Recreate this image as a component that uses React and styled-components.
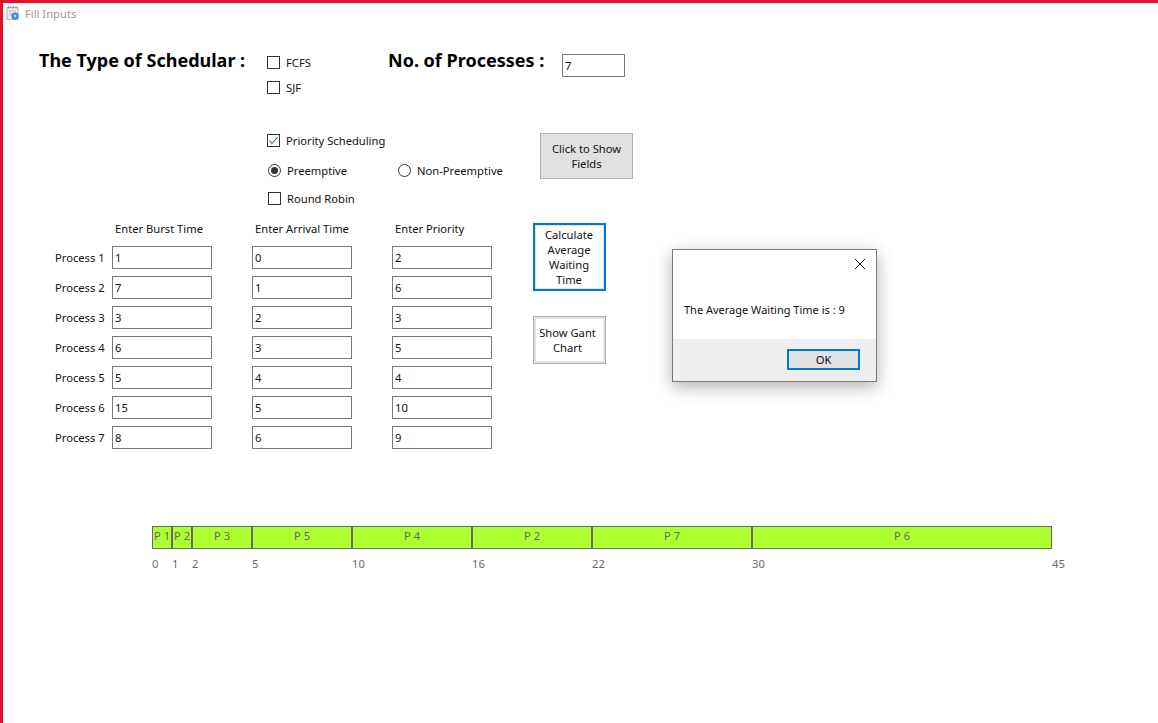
import styled, { createGlobalStyle } from 'styled-components';

const GlobalStyle = createGlobalStyle`
    html, body {
        margin: 0;
        padding: 0;
        background: #fff;
    }
    * {
        box-sizing: border-box;
    }
`;

const Frame = styled.div`
    position: relative;
    width: 1158px;
    height: 723px;
    overflow: hidden;
    background: #fff;
    border-top: 3px solid #e11127;
    border-left: 3px solid #e11127;
    font-family: "Noto Sans", "Open Sans", sans-serif;
    font-size: 11.2px;
    color: #111;
`;

const TitleBar = styled.div`
    display: flex;
    align-items: center;
    gap: 4px;
    height: 20px;
    padding-left: 2px;
    color: #9a9a9a;
`;

const Body = styled.div`
    display: flex;
    flex-direction: column;
    padding: 25px 0 0 36px;
`;

const TopArea = styled.div`
    display: flex;
`;

const Heading = styled.h1`
    margin: 0;
    font-size: 18px;
    font-weight: 700;
    line-height: 24px;
    color: #000;
    width: ${({$width}) => $width}px;
`;

const ChoiceColumn = styled.div`
    display: flex;
    flex-direction: column;
    width: 121px;
    margin-top: 2px;
`;

const Choice = styled.label`
    display: flex;
    align-items: center;
    gap: 6px;
    height: ${({$height}) => $height ?? 25}px;
    margin-left: ${({$indent}) => $indent ?? 0}px;
`;

const Check = styled.span`
    display: flex;
    align-items: center;
    justify-content: center;
    width: 13px;
    height: 13px;
    border: 1px solid #333;
    background: #fff;
`;

const Radio = styled.span`
    display: flex;
    align-items: center;
    justify-content: center;
    width: 13px;
    height: 13px;
    border: 1px solid #333;
    border-radius: 50%;
    &::after {
        content: '';
        display: ${({$on}) => $on ? 'block' : 'none'};
        width: 7px;
        height: 7px;
        border-radius: 50%;
        background: #333;
    }
`;

const Field = styled.div`
    display: flex;
    align-items: center;
    width: ${({$width}) => $width ?? 100}px;
    height: 23px;
    margin-top: ${({$top}) => $top ?? 0}px;
    padding-left: 2px;
    border: 1px solid #7a7a7a;
    background: #fff;
`;

const SchedulingArea = styled.div`
    display: flex;
    margin-top: 26px;
    padding-left: 228px;
`;

const SchedulingOptions = styled.div`
    display: flex;
    flex-direction: column;
    width: 273px;
`;

const RadioRow = styled.div`
    display: flex;
    gap: 51px;
`;

const Button = styled.div`
    display: flex;
    align-items: center;
    justify-content: center;
    text-align: center;
    line-height: 15px;
    width: ${({$width}) => $width}px;
    height: ${({$height}) => $height}px;
    margin-top: ${({$top}) => $top ?? 0}px;
    padding-right: ${({$nudge}) => $nudge ?? 0}px;
    background: ${({$fill}) => $fill ?? '#e1e1e1'};
    border: ${({$border}) => $border ?? '1px solid #adadad'};
    box-shadow: ${({$inner}) => $inner ? `inset 0 0 0 ${$inner}px #e1e1e1` : 'none'};
`;

const TableArea = styled.div`
    display: flex;
    margin-top: 12px;
`;

const InputsGrid = styled.div`
    display: grid;
    grid-template-columns: 57px 140px 140px 100px;
    grid-template-rows: 23px;
    grid-auto-rows: 30px;
    width: 494px;
    padding-left: 16px;
`;

const ColumnTitle = styled.div`
    margin-top: -2px;
    padding-left: 3px;
    line-height: 16px;
    white-space: nowrap;
`;

const RowLabel = styled.div`
    display: flex;
    align-items: center;
    height: 23px;
    white-space: nowrap;
`;

const ActionColumn = styled.div`
    display: flex;
    flex-direction: column;
    gap: 25px;
`;

const Gantt = styled.div`
    display: flex;
    flex-direction: column;
    margin: 0 0 0 113px;
`;

const GanttBar = styled.div`
    display: flex;
    width: 900px;
    height: 23px;
    margin-top: 70px;
    border: 1px solid #696969;
    background: #adff2f;
`;

const GanttCell = styled.div`
    display: flex;
    justify-content: center;
    flex: none;
    line-height: 18px;
    color: #696969;
    white-space: nowrap;
    border-right: 2px solid #696969;
    &:last-child {
        border-right: none;
    }
`;

const TickRow = styled.div`
    display: flex;
    margin-top: 7px;
    color: #6b6b6b;
    line-height: 16px;
`;

const Tick = styled.div`
    flex: none;
    white-space: nowrap;
`;

const Dialog = styled.div`
    position: absolute;
    left: 669px;
    top: 246px;
    display: flex;
    flex-direction: column;
    width: 205px;
    height: 133px;
    background: #fff;
    border: 1px solid #7a7a7a;
    box-shadow: 0 5px 16px rgba(0, 0, 0, 0.3);
`;

const DialogClose = styled.div`
    display: flex;
    justify-content: flex-end;
    padding: 8px 10px 0 0;
    height: 26px;
`;

const DialogText = styled.div`
    flex: 1;
    padding: 26px 0 0 11px;
    font-size: 11px;
    line-height: 16px;
`;

const DialogFooter = styled.div`
    display: flex;
    justify-content: flex-end;
    align-items: center;
    height: 42px;
    padding: 0 16px 2px 0;
    background: #efefef;
`;

const CheckMark = () => (
    <Check>
        <svg width="11" height="11" viewBox="0 0 11 11" fill="none">
            <path d="M1.5 5.5 L4 8.5 L9.5 2" stroke="#555" strokeWidth="1.1" />
        </svg>
    </Check>
);

const AppIcon = () => (
    <svg width="16" height="16" viewBox="0 0 16 16">
        <rect x="2" y="2.5" width="11" height="12" fill="#ececec" stroke="#b0b0b0" />
        <path d="M3.5 1v2.5M6 1v2.5M8.5 1v2.5M11 1v2.5" stroke="#999" />
        <path d="M4 6h7M4 8h3M4 10h3" stroke="#bbb" />
        <circle cx="10" cy="11" r="3.6" fill="#3a86d8" />
        <circle cx="10" cy="11" r="1.4" fill="#a9d3f7" />
    </svg>
);

const rows = [
    ['1', '0', '2'],
    ['7', '1', '6'],
    ['3', '2', '3'],
    ['6', '3', '5'],
    ['5', '4', '4'],
    ['15', '5', '10'],
    ['8', '6', '9'],
];

const segments = [
    { name: 'P 1', from: 0, to: 1 },
    { name: 'P 2', from: 1, to: 2 },
    { name: 'P 3', from: 2, to: 5 },
    { name: 'P 5', from: 5, to: 10 },
    { name: 'P 4', from: 10, to: 16 },
    { name: 'P 2', from: 16, to: 22 },
    { name: 'P 7', from: 22, to: 30 },
    { name: 'P 6', from: 30, to: 45 },
];

const UNIT = 20;

export default function App() {
    return (
        <>
            <GlobalStyle />
            <Frame>
                <TitleBar>
                    <AppIcon />
                    <span>Fill Inputs</span>
                </TitleBar>
                <Body>
                    <TopArea>
                        <Heading $width={228}>The Type of Schedular :</Heading>
                        <ChoiceColumn>
                            <Choice><Check />FCFS</Choice>
                            <Choice><Check />SJF</Choice>
                        </ChoiceColumn>
                        <Heading $width={174}>No. of Processes :</Heading>
                        <Field $width={63} $top={6}>7</Field>
                    </TopArea>
                    <SchedulingArea>
                        <SchedulingOptions>
                            <Choice $height={29}><CheckMark />Priority Scheduling</Choice>
                            <RadioRow>
                                <Choice $height={30} $indent={1}><Radio $on />Preemptive</Choice>
                                <Choice $height={30}><Radio />Non-Preemptive</Choice>
                            </RadioRow>
                            <Choice $height={26} $indent={1}><Check />Round Robin</Choice>
                        </SchedulingOptions>
                        <Button $width={93} $height={46} $top={7}>Click to Show<br />Fields</Button>
                    </SchedulingArea>
                    <TableArea>
                        <InputsGrid>
                            <div />
                            <ColumnTitle>Enter Burst Time</ColumnTitle>
                            <ColumnTitle>Enter Arrival Time</ColumnTitle>
                            <ColumnTitle>Enter Priority</ColumnTitle>
                            {rows.map((row, i) => [
                                <RowLabel key={`l${i}`}>Process {i + 1}</RowLabel>,
                                ...row.map((val, j) => <Field key={`${i}-${j}`}>{val}</Field>),
                            ])}
                        </InputsGrid>
                        <ActionColumn>
                            <Button $width={73} $height={68} $fill="#fff" $border="2px solid #0078d7" $inner={1} $nudge={1}>Calculate<br />Average<br />Waiting<br />Time</Button>
                            <Button $width={73} $height={48} $fill="#fff" $border="1px solid #adadad" $inner={2} $nudge={4}>Show Gant<br />Chart</Button>
                        </ActionColumn>
                    </TableArea>
                    <Gantt>
                        <GanttBar>
                            {segments.map((seg, i) => (
                                <GanttCell key={i} style={{ width: (seg.to - seg.from) * UNIT - (i === segments.length - 1 ? 2 : 0) }}>{seg.name}</GanttCell>
                            ))}
                        </GanttBar>
                        <TickRow>
                            {segments.map((seg, i) => (
                                <Tick key={i} style={{ width: (seg.to - seg.from) * UNIT }}>{seg.from}</Tick>
                            ))}
                            <Tick>45</Tick>
                        </TickRow>
                    </Gantt>
                </Body>
                <Dialog>
                    <DialogClose>
                        <svg width="12" height="12" viewBox="0 0 12 12" fill="none">
                            <path d="M1 1 L11 11 M11 1 L1 11" stroke="#222" strokeWidth="1" />
                        </svg>
                    </DialogClose>
                    <DialogText>The Average Waiting Time is : 9</DialogText>
                    <DialogFooter>
                        <Button $width={73} $height={21} $border="2px solid #0078d7">OK</Button>
                    </DialogFooter>
                </Dialog>
            </Frame>
        </>
    );
}
